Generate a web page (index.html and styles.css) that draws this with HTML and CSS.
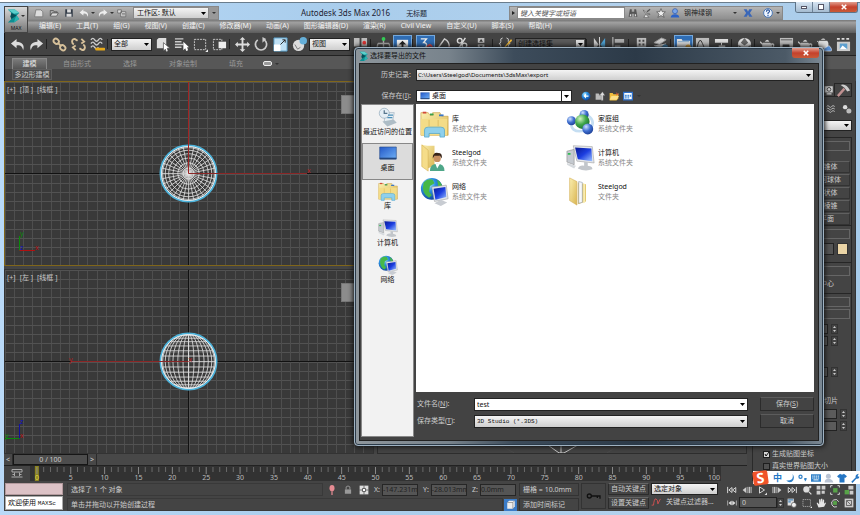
FILE: index.html
```html
<!DOCTYPE html>
<html lang="zh-CN">
<head>
  <meta charset="UTF-8">
  <meta name="viewport" content="width=device-width, initial-scale=1.0">
  <title>Autodesk 3ds Max 2016 无标题</title>
  <link rel="stylesheet" href="styles.css">
</head>
<body>
  <!-- icon sprites -->
  <svg class="sprites" aria-hidden="true">
    <defs>
      <linearGradient id="g-folder" x1="0" y1="0" x2="1" y2="1"><stop offset="0" stop-color="#fbefb0"/><stop offset="1" stop-color="#d9b552"/></linearGradient>
      <linearGradient id="g-screen" x1="0" y1="0" x2="1" y2="1"><stop offset="0" stop-color="#0a1890"/><stop offset=".5" stop-color="#1c3ee0"/><stop offset="1" stop-color="#9fc4ff"/></linearGradient>
      <linearGradient id="g-desk" x1="0" y1="0" x2="1" y2="1"><stop offset="0" stop-color="#2358c8"/><stop offset="1" stop-color="#6fb0f5"/></linearGradient>
      <radialGradient id="g-globe" cx=".35" cy=".3" r=".8"><stop offset="0" stop-color="#b4ecff"/><stop offset=".4" stop-color="#2a8fe0"/><stop offset="1" stop-color="#0c3a90"/></radialGradient>
      <radialGradient id="g-blue" cx=".35" cy=".3" r=".8"><stop offset="0" stop-color="#cfe2ff"/><stop offset=".5" stop-color="#3f6fd0"/><stop offset="1" stop-color="#18388c"/></radialGradient>
      <radialGradient id="g-green" cx=".35" cy=".3" r=".8"><stop offset="0" stop-color="#d0f5c0"/><stop offset=".5" stop-color="#3fa648"/><stop offset="1" stop-color="#17682a"/></radialGradient>
    </defs>
    <symbol id="i-max" viewBox="0 0 16 16"><path d="M1 1h8l5 4-3 3 3 4-6 4H1l4-4-1-3 1-4z" fill="#0e8f92"/><path d="M1 1h8l5 4-6 1z" fill="#5cd0cc"/><path d="M5 5l6 3-6 4-1-3z" fill="#064f58"/><path d="M11 8l3 4-6 4 1-4z" fill="#2bb3b0"/></symbol>
    <symbol id="i-new" viewBox="0 0 16 16"><path d="M3 3h8l3 3v8H1z" fill="#ddd" stroke="#666"/></symbol>
    <symbol id="i-open" viewBox="0 0 16 16"><path d="M2 12V4h5l1 2h5v2H5z" fill="#aaa" stroke="#444"/><path d="M2 13l3-5h10l-3 5z" fill="#ddd" stroke="#444"/></symbol>
    <symbol id="i-save" viewBox="0 0 16 16"><path d="M2 2h12v12H2z" fill="#333c48"/><path d="M5 2h6v5H5zM4 9h8v5H4z" fill="#ddd"/></symbol>
    <symbol id="i-undo" viewBox="0 0 16 16"><path d="M7 2L1 7l6 5V9c4-1 6 1 7 5 2-5-1-9-7-9z" fill="currentColor"/></symbol>
    <symbol id="i-redo" viewBox="0 0 16 16"><path d="M9 2l6 5-6 5V9c-4-1-6 1-7 5-2-5 1-9 7-9z" fill="currentColor"/></symbol>
    <symbol id="i-project" viewBox="0 0 16 16"><path d="M1 3h6v5H1zM6 6h8v8H6z" fill="#ddd" stroke="#555"/><path d="M8 9h5M8 11h5" stroke="#555"/></symbol>
    <symbol id="i-link" viewBox="0 0 16 16"><g fill="none" stroke="#d6c09a" stroke-width="2"><ellipse cx="4.500" cy="4.500" rx="3" ry="2.500" transform="rotate(40 4.500 4.500)"/><ellipse cx="11.500" cy="11.500" rx="3" ry="2.500" transform="rotate(40 11.500 11.500)"/><path d="M6 6l4 4"/></g></symbol>
    <symbol id="i-unlink" viewBox="0 0 16 16"><path d="M3 8c-3-2-2-6 1-6l3 2M13 8c3 2 2 6-1 6l-3-2M11 2l3 3-3 2M5 14l-3-3 3-2" fill="none" stroke="#d6c09a" stroke-width="2"/></symbol>
    <symbol id="i-bind" viewBox="0 0 16 16"><path d="M1 3q2-3 4 0t4 0 4 0M1 7q2-3 4 0t4 0 4 0M1 11q2-3 4 0t4 0" fill="none" stroke="#ccc" stroke-width="1.500"/><path d="M7 13h3m1 0h4" stroke="#e5a81a" stroke-width="3" stroke-linecap="round"/></symbol>
    <symbol id="i-select" viewBox="0 0 16 16"><path d="M2 3l2-2h8v9l-2 2H2z" fill="#ddd"/><path d="M9 6v9l2-2 1 3 2-1-1-3h3z" fill="#fff" stroke="#444" stroke-width=".7"/></symbol>
    <symbol id="i-byname" viewBox="0 0 16 16"><path d="M1 2h9M1 5h7M1 8h9M1 11h7" stroke="#ccc" stroke-width="1.500"/><path d="M10 5v9l2-2 1 3 2-1-1-3h2z" fill="#fff"/></symbol>
    <symbol id="i-region" viewBox="0 0 16 16"><path d="M1.500 2.500h12v11h-12z" fill="none" stroke="#ccc" stroke-dasharray="2 1"/><path d="M16 13v3h-3z" fill="#eee"/></symbol>
    <symbol id="i-crossing" viewBox="0 0 16 16"><path d="M1.500 2.500h9v11h-9z" fill="none" stroke="#ccc" stroke-dasharray="2 1"/><path d="M7 5h8v7H7z" fill="#eee"/></symbol>
    <symbol id="i-move" viewBox="0 0 16 16"><path d="M8 0l3 3H9v4h4V5l3 3-3 3V9H9v4h2l-3 3-3-3h2V9H3v2L0 8l3-3v2h4V3H5z" fill="#ddd"/></symbol>
    <symbol id="i-rotate" viewBox="0 0 16 16"><path d="M4 3a6 6 0 1 0 7 0" fill="none" stroke="#ccc" stroke-width="1.800"/><path d="M9 0l4 2-4 4z" fill="#ccc"/></symbol>
    <symbol id="i-scale" viewBox="0 0 16 16"><path d="M1 1h14v14H1z" fill="#bfe0f4" stroke="#559cc8"/><path d="M1 8h7v7H1z" fill="#fff"/><path d="M8 8l5-5M10 3h3v3" stroke="#222" fill="none"/></symbol>
    <symbol id="i-place" viewBox="0 0 16 16"><circle cx="7" cy="9" r="6" fill="#ddd"/><circle cx="12" cy="4" r="4" fill="#65afd8"/><path d="M3 8l3 5 3-2" fill="none" stroke="#777"/></symbol>
    <symbol id="i-pivot" viewBox="0 0 16 16"><path d="M1 1h6v9H1zM9 1h6v9H9z" fill="#bbb"/><circle cx="12" cy="6" r="2" fill="#d33"/></symbol>
    <symbol id="i-manip" viewBox="0 0 16 16"><path d="M8 1v11M2 7h12M2 7l-1 5M14 7l1 5" stroke="#aaa" fill="none" stroke-width="1.500"/><circle cx="8" cy="2" r="2" fill="#3c5"/></symbol>
    <symbol id="i-keymode" viewBox="0 0 16 16"><path d="M2 3h12v10H2z" fill="#eee"/><path d="M8 4l4 4H9v4H7V8H4z" fill="#222"/></symbol>
    <symbol id="i-snap" viewBox="0 0 16 16"><path d="M3 2h6L6 6q4 0 3 4-2 3-6 1" fill="none" stroke="#eee" stroke-width="1.500"/><path d="M11 12a2 2 0 1 1 3 0" fill="none" stroke="#e44" stroke-width="2"/></symbol>
    <symbol id="i-angle" viewBox="0 0 16 16"><path d="M1 12L8 2q6 3 5 10" fill="none" stroke="#ccc" stroke-width="1.500"/><circle cx="13" cy="12" r="2" fill="#c44"/></symbol>
    <symbol id="i-percent" viewBox="0 0 16 16"><circle cx="4" cy="4" r="2.500" fill="none" stroke="#ddd" stroke-width="1.500"/><circle cx="9" cy="9" r="2.500" fill="none" stroke="#ddd" stroke-width="1.500"/><path d="M10 1L3 12" stroke="#ddd" stroke-width="1.500"/><circle cx="14" cy="12" r="2" fill="#c44"/></symbol>
    <symbol id="i-spin" viewBox="0 0 16 16"><path d="M3 1h7v5H3zM3 8h7v5H3z" fill="#bbb"/><path d="M6.500 2l2 3h-4zM6.500 12l2-3h-4z" fill="#333"/><circle cx="13" cy="12" r="2" fill="#c44"/></symbol>
    <symbol id="i-sets" viewBox="0 0 16 16"><path d="M5 1Q2 1 3 5 3 7 1 7q2 0 2 3-1 4 2 4M9 1q3 0 2 4 0 2 2 2-2 0-2 3 1 4-2 4" fill="none" stroke="#ccc"/><path d="M7 10l7-8 1 2-7 7z" fill="#f0b93a"/></symbol>
    <symbol id="i-mirror" viewBox="0 0 16 16"><path d="M2 1l5 7-5 7z" fill="#ccc"/><path d="M14 1L9 8l5 7z" fill="#4ea2d4"/><path d="M8 0v16" stroke="#ddd"/></symbol>
    <symbol id="i-align" viewBox="0 0 16 16"><path d="M2 0v15" stroke="#ccc"/><path d="M4 2h10v4H4zM4 9h6v4H4z" fill="#aaa"/></symbol>
    <symbol id="i-layer" viewBox="0 0 16 16"><path d="M3 1h10v14H3z" fill="#bbb"/><path d="M5 4h2M9 4h2M5 8h2M9 8h2" stroke="#444" stroke-width="2"/></symbol>
    <symbol id="i-layers" viewBox="0 0 16 16"><path d="M1 6l8-5 5 2-7 5zM1 9l6 3 7-5M1 12l6 3 7-5" fill="#ccc" stroke="#999"/><circle cx="13" cy="11" r="3" fill="#3d80b0"/></symbol>
    <symbol id="i-ribbon" viewBox="0 0 16 16"><path d="M1 4V2h5l1 2h8v9H1z" fill="#ddd"/><path d="M2 5h12" stroke="#7da4c8"/><circle cx="13" cy="11" r="3" fill="#dca23a"/></symbol>
    <symbol id="i-curve" viewBox="0 0 16 16"><path d="M1 1h14v13H1z" fill="#bbb"/><path d="M2 12Q5-2 8 7t6 4" fill="none" stroke="#333"/></symbol>
    <symbol id="i-schem" viewBox="0 0 16 16"><path d="M1 2h14v4H1zM5 9h7v5H5z" fill="#ddd"/><path d="M8 6v3" stroke="#ddd"/></symbol>
    <symbol id="i-mat" viewBox="0 0 16 16"><circle cx="8" cy="8" r="7" fill="#ddd"/><path d="M8 1l4 5-4 3-4-3zM1 8l3 2v4M15 8l-3 2v4" fill="#666"/></symbol>
    <symbol id="i-teapot" viewBox="0 0 16 16"><path d="M3 6h8q4 5-1 9H5Q1 12 3 6zM5 5q3-4 5 0z" fill="#ccc"/><path d="M3 8L0 5M11 8q5-2 3 3l-3 2" fill="none" stroke="#ccc" stroke-width="1.500"/></symbol>
    <symbol id="i-frame" viewBox="0 0 16 16"><path d="M1 1h14v13H1z" fill="#bbb"/><path d="M2 3h12" stroke="#555"/><path d="M4 8h7q1 4-2 5H6Q3 12 4 8z" fill="#333"/></symbol>
    <symbol id="i-cloud" viewBox="0 0 16 16"><path d="M2 4h9q3 4-1 8H4Q0 9 2 4zM4 3q3-3 5 0z" fill="#ddd"/><path d="M2 6L0 4" stroke="#ddd"/><path d="M7 15q0-4 3-4 3-4 5 1 2 3-1 3z" fill="#5b92d8" stroke="#fff" stroke-width=".6"/></symbol>
    <symbol id="i-gallery" viewBox="0 0 16 16"><path d="M1 1h3v2H1zM6 1h3v2H6zM11 1h3v2h-3z" fill="#ddd"/><path d="M1 5h14v10H1z" fill="#ccc"/><path d="M4 7h8v6H4z" fill="#5da0d0"/><path d="M4 13l3-4 5 4z" fill="#fff"/></symbol>
    <symbol id="i-binoc" viewBox="0 0 16 16"><path d="M3 2h3v4h4V2h3l2 12h-5V9H6v5H1z" fill="#555"/><path d="M3 10h2v3H3zM11 10h2v3h-2z" fill="#ddd"/></symbol>
    <symbol id="i-sat" viewBox="0 0 16 16"><path d="M2 3q2 8 11 7L7 8zM6 10l-3 5h8z" fill="#eee" stroke="#555"/><path d="M8 6l5-4" stroke="#555" stroke-width="2"/></symbol>
    <symbol id="i-star" viewBox="0 0 16 16"><path d="M8 1l2 5h5l-4 4 2 5-5-3-5 3 2-5-4-4h5z" fill="#eee" stroke="#444"/></symbol>
    <symbol id="i-user" viewBox="0 0 16 16"><circle cx="8" cy="5" r="4" fill="#7aa5e8" stroke="#2450a8"/><path d="M1 15q1-5 7-5t7 5z" fill="#2c62c8"/></symbol>
    <symbol id="i-exch" viewBox="0 0 16 16"><path d="M1 2h5l2 4 2-4h5l-4 6 4 6h-5l-2-4-2 4H1l4-6z" fill="#3a67b8"/></symbol>
    <symbol id="i-help" viewBox="0 0 16 16"><circle cx="8" cy="8" r="7" fill="#eef5ff" stroke="#4373b5" stroke-width="1.500"/><path d="M5.500 6q0-3 2.500-3t2.500 2.500Q10 7 8 8v2M8 11v2" fill="none" stroke="#26519a" stroke-width="1.800"/></symbol>
    <symbol id="i-waves" viewBox="0 0 16 16"><path d="M1 4q2-3 4 0t4 0 5 0M1 8q2-3 4 0t4 0 5 0M1 12q2-3 4 0t4 0 5 0" fill="none" stroke="#bbb" stroke-width="1.500"/></symbol>
    <symbol id="i-gears" viewBox="0 0 16 16"><circle cx="5" cy="5" r="3.500" fill="#ddd"/><circle cx="11" cy="11" r="4" fill="#bbb"/></symbol>
    <symbol id="i-display" viewBox="0 0 16 16"><path d="M1 2h13v10H1zM4 13h8v2H4z" fill="#ccc"/><circle cx="8" cy="7" r="3" fill="none" stroke="#444" stroke-width="1.500"/></symbol>
    <symbol id="i-hammer" viewBox="0 0 16 16"><path d="M2 14L9 6" stroke="#c09090" stroke-width="2.500"/><path d="M5 2q6-2 10 6l-3 1-3-4z" fill="#ccc"/></symbol>
    <!-- file dialog -->
    <symbol id="i-recent" viewBox="0 0 32 32"><path d="M11 9h15l-3 15H10z" fill="#e8f0f4" stroke="#9ab"/><circle cx="10" cy="10" r="8" fill="#e4eef5" stroke="#8aa4b5"/><path d="M10 5v5h5" stroke="#57768c" fill="none" stroke-width="2"/><path d="M7 23l18-3 5 5-15 6z" fill="#aebdc6"/><path d="M16 13h8M15 17h8" stroke="#4c8fb8" stroke-width="2"/></symbol>
    <symbol id="i-desktop" viewBox="0 0 32 32"><path d="M2 5h28v20H2z" fill="url(#g-desk)" stroke="#264b86"/><path d="M2 23h28v3H2z" fill="#24467c"/></symbol>
    <symbol id="i-library" viewBox="0 0 32 32"><path d="M1 4h8l2 3h3V4h8l2 4h7v21H1z" fill="url(#g-folder)" stroke="#c79f42" stroke-width=".7"/><path d="M3 4h4" stroke="#d34a3a" stroke-width="2"/><path d="M11 6h4" stroke="#3a9f4a" stroke-width="2"/><path d="M21 7h5" stroke="#3a77c8" stroke-width="2"/><path d="M1 11h29v18H1z" fill="#f4dc88"/><path d="M10 12v7M20 12v7" stroke="#dcbc62"/><path d="M5 31v-8q0-3 4-3h14q4 0 4 3v8h-5v-4H10v4z" fill="#8fd0ec" stroke="#4fa4cc" stroke-width=".8"/></symbol>
    <symbol id="i-userdir" viewBox="0 0 32 32"><path d="M2 2l6 1h8v22l-8 3-6-2z" fill="url(#g-folder)"/><path d="M2 2l7 6v23l-7-5z" fill="#f5dd8a" stroke="#d2ad50" stroke-width=".6"/><circle cx="19" cy="17" r="4" fill="#c68e60"/><path d="M14 17q0-7 6-6 5 0 4 6l-2-3h-6z" fill="#382418"/><path d="M11 31q0-8 8-8t8 8z" fill="#4fa789"/><path d="M17 23l2 5 3-5z" fill="#fff"/></symbol>
    <symbol id="i-globe" viewBox="0 0 32 32"><circle cx="13" cy="13" r="12" fill="url(#g-globe)"/><path d="M4 6q5-5 10-3l2 4-5 3-1 6 3 4-3 3Q1 18 4 6zM19 3q5 3 6 9l-5-2z" fill="#46b848"/><path d="M13 11l16-2 2 15-15 3z" fill="#dfe4ea" stroke="#999" stroke-width=".6"/><path d="M15 13l13-2 1 11-12 3z" fill="url(#g-screen)"/><path d="M16 29l7-4 7 3-7 4z" fill="#c8ccd2"/></symbol>
    <symbol id="i-computer" viewBox="0 0 32 32"><path d="M1 9l8-2v17l-8-3z" fill="#c5cad0" stroke="#888" stroke-width=".6"/><path d="M2 12h3" stroke="#3b5" stroke-width="2"/><path d="M8 3l21 1 2 18-19-2z" fill="#e4e7eb" stroke="#999" stroke-width=".6"/><path d="M10 5l18 1 1 14-16-2z" fill="url(#g-screen)"/><path d="M13 28q2-4 7-3v-4h4v4q6 1 5 4-8 3-16-1z" fill="#c2c6cb"/><path d="M1 22l10 3-2 3-8-4z" fill="#d6dade"/></symbol>
    <symbol id="i-homegroup" viewBox="0 0 32 32"><path d="M6 13q-2 14 14 11" stroke="#c5def2" fill="none" stroke-width="3"/><path d="M24 7q9 6 3 15" stroke="#c5def2" fill="none" stroke-width="3"/><circle cx="20" cy="6" r="5" fill="url(#g-blue)"/><circle cx="6" cy="13" r="5" fill="url(#g-blue)"/><circle cx="18" cy="14" r="8" fill="url(#g-green)"/><circle cx="24" cy="22" r="6" fill="url(#g-blue)"/></symbol>
    <symbol id="i-folder" viewBox="0 0 32 32"><path d="M13 6l9 2v19l-9 3z" fill="#e2c566"/><path d="M14 5l4 1v22l-4 1z" fill="#f6f7fa" stroke="#8794a8" stroke-width=".6"/><path d="M4 1l8 4v26l-8-5z" fill="url(#g-folder)" stroke="#cfa94b" stroke-width=".6"/><path d="M19 7l2 1v20l-2 1z" fill="#f9ecb0"/></symbol>
    <symbol id="i-back" viewBox="0 0 16 16"><circle cx="8" cy="8" r="7" fill="url(#g-globe)"/><path d="M8 4L4 8l4 4V9h4V7H8z" fill="#fff"/></symbol>
    <symbol id="i-up" viewBox="0 0 16 16"><path d="M1 4h5l1 2h5v8H1z" fill="#bbb"/><path d="M10 15V7H7l5-6 4 6h-3v8z" fill="#ddd" stroke="#555" stroke-width=".6"/></symbol>
    <symbol id="i-newdir" viewBox="0 0 16 16"><path d="M1 3h5l1 2h6l2-2v9l-3 3H1z" fill="#f0bd3c"/><path d="M4 8h12l-4 6H1z" fill="#fbe08a"/><path d="M12 1l1 3 3 1-3 1-1 2z" fill="#e5533a"/></symbol>
    <symbol id="i-view" viewBox="0 0 16 16"><path d="M1 2h14v12H1z" fill="#fff" stroke="#2e6fc8" stroke-width="2"/><path d="M3 6h3v3H3zM7 6h3v3H7zM11 6h2v3h-2zM3 10h3v2H3zM7 10h3v2H7z" fill="#4a8fd8"/></symbol>
    <!-- status bar -->
    <symbol id="i-pin" viewBox="0 0 16 16"><ellipse cx="8" cy="5" rx="4" ry="5" fill="#e58b92"/><path d="M8 10v6" stroke="#e58b92" stroke-width="2"/></symbol>
    <symbol id="i-lock" viewBox="0 0 16 16"><path d="M3 7h10v7H3z" fill="#999"/><path d="M5 7V3q3-3 6 0v4" fill="none" stroke="#999" stroke-width="1.500"/></symbol>
    <symbol id="i-abs" viewBox="0 0 16 16"><path d="M1 1h14v14H1z" fill="#ddd"/><circle cx="8" cy="8" r="3" fill="#fff" stroke="#333" stroke-width="1.500"/><path d="M8 1v3M8 12v3M1 8h3M12 8h3" stroke="#333"/></symbol>
    <symbol id="i-key" viewBox="0 0 24 12"><circle cx="5" cy="6" r="3" fill="none" stroke="#111" stroke-width="2"/><path d="M8 6h13v4M17 6v3" stroke="#111" stroke-width="2" fill="none"/></symbol>
    <symbol id="i-cube" viewBox="0 0 16 16"><path d="M2 4l3-3h9v9l-3 4H2z" fill="#eee"/><path d="M2 4h9v10M11 4l3-3" fill="none" stroke="#777"/></symbol>
    <symbol id="i-wave" viewBox="0 0 16 16"><path d="M1 13h3Q5 2 8 3t3 8l4-8" fill="none" stroke="#d05050" stroke-width="1.500"/></symbol>
    <symbol id="i-first" viewBox="0 0 16 16"><path d="M1 3v10M8 4L3 8l5 4zM14 4L9 8l5 4z" fill="none" stroke="#ddd" stroke-width="1.500"/></symbol>
    <symbol id="i-prev" viewBox="0 0 16 16"><path d="M7 3v10L1 8z" fill="#ccc"/><path d="M9.500 3v10M12 3v10M14.500 3v10" stroke="#ccc" stroke-width="1.500"/></symbol>
    <symbol id="i-play" viewBox="0 0 16 16"><path d="M4 3l8 5-8 5z" fill="none" stroke="#ddd" stroke-width="1.500"/><path d="M16 12v4h-4z" fill="#ddd"/></symbol>
    <symbol id="i-next" viewBox="0 0 16 16"><path d="M9 3v10l6-5z" fill="#ccc"/><path d="M1.500 3v10M4 3v10M6.500 3v10" stroke="#ccc" stroke-width="1.500"/></symbol>
    <symbol id="i-last" viewBox="0 0 16 16"><path d="M15 3v10M2 4l5 4-5 4zM8 4l5 4-5 4z" fill="none" stroke="#ddd" stroke-width="1.500"/></symbol>
    <symbol id="i-keystep" viewBox="0 0 16 16"><path d="M1 4v8M15 4v8M7 5L3 8l4 3zM9 5l4 3-4 3z" fill="#ddd" stroke="#ddd"/></symbol>
    <symbol id="i-timecfg" viewBox="0 0 16 16"><path d="M1 1h10v11H1z" fill="#ddd"/><path d="M2 3h8M2 6h4" stroke="#4a86b8" stroke-width="2"/><circle cx="11" cy="11" r="4" fill="#eee" stroke="#444"/></symbol>
    <symbol id="i-zoom" viewBox="0 0 16 16"><circle cx="7" cy="7" r="5" fill="#ddd"/><path d="M11 11l4 4M11 3h4M13 1v4" stroke="#ddd" stroke-width="2"/></symbol>
    <symbol id="i-zoomall" viewBox="0 0 16 16"><path d="M1 1h6v6H1zM9 1h6v6H9zM1 9h6v6H1zM9 9h5v5H9z" fill="#ccc"/></symbol>
    <symbol id="i-extent" viewBox="0 0 16 16"><path d="M5 5h7v7H5z" fill="#57a348"/><path d="M1 4V1h3M12 1h3v3M15 12v3h-3M4 15H1v-3" fill="none" stroke="#ddd" stroke-width="1.500"/></symbol>
    <symbol id="i-extall" viewBox="0 0 16 16"><path d="M7 1h8v6H7zM9 9h6v6H9z" fill="#ccc"/><path d="M1 8h7v7H1z" fill="#57a348"/></symbol>
    <symbol id="i-hand" viewBox="0 0 16 16"><path d="M4 15L1 8l1-1 3 3V2h2v5l1-6h2v6l1-5 2 1v6l2-2 1 1-3 6z" fill="#e5e5e5"/></symbol>
    <symbol id="i-orbit" viewBox="0 0 16 16"><path d="M5 5h6v6H5z" fill="#57a348"/><path d="M14 6a6 6 0 1 0-3 8" fill="none" stroke="#ddd" stroke-width="1.500"/></symbol>
    <symbol id="i-maxvp" viewBox="0 0 16 16"><path d="M1 1h14v14H1z" fill="#ccc"/><path d="M4 4h8v8H4zM5 5l6 6" stroke="#333" fill="none"/></symbol>
    <symbol id="i-trackview" viewBox="0 0 24 20"><path d="M2 2h20v5H2zM1 17h22M7 8v7M17 8v7M3 12h5M16 12h5" fill="none" stroke="#aaa" stroke-width="2"/></symbol>
    <!-- input method bar -->
    <symbol id="i-moon" viewBox="0 0 16 16"><path d="M12 1q3 12-10 11 4 4 9 2 6-5 1-13z" fill="#2f80c8"/></symbol>
    <symbol id="i-punct" viewBox="0 0 16 16"><circle cx="4" cy="6" r="2.500" fill="none" stroke="#2f80c8" stroke-width="2"/><path d="M10 8h4q0 4-3 6 1-3-1-3z" fill="#2f80c8"/></symbol>
    <symbol id="i-kbd" viewBox="0 0 16 16"><path d="M0 2h16v12H0z" fill="#2f80c8"/><path d="M2 5h12M2 8h12" stroke="#fff" stroke-width="1.500" stroke-dasharray="2 1"/><path d="M4 11h8" stroke="#fff" stroke-width="1.500"/></symbol>
    <symbol id="i-person" viewBox="0 0 16 16"><circle cx="7" cy="5" r="4" fill="#b9c3d3"/><path d="M1 15q0-6 6-6t8 6z" fill="#b9c3d3"/></symbol>
    <symbol id="i-shirt" viewBox="0 0 16 16"><path d="M5 1q3 3 6 0l5 4-3 3-1-1v8H4V7L3 8 0 5z" fill="#2576c4"/></symbol>
    <symbol id="i-wrench" viewBox="0 0 16 16"><path d="M2 14l7-7q-1-5 5-6l-2 4 3 1q0 4-5 3l-6 7z" fill="#2576c4"/></symbol>
  </svg>

  <div class="app">
    <header class="top">
      <button class="app-menu" aria-label="MAX"><svg class="app-logo"><use href="#i-max"/></svg><i class="caret"></i><span>MAX</span></button>
      <div class="titlebar">
        <div class="quick">
          <button><svg class="icon-s"><use href="#i-new"/></svg></button>
          <button><svg class="icon-s"><use href="#i-open"/></svg></button>
          <button><svg class="icon-s"><use href="#i-save"/></svg></button>
          <button><svg class="icon-s"><use href="#i-undo"/></svg></button>
          <i class="caret"></i>
          <button><svg class="icon-s"><use href="#i-redo"/></svg></button>
          <i class="caret"></i>
          <button><svg class="icon-s"><use href="#i-project"/></svg></button>
          <select class="workspace" aria-label="工作区"><option>工作区: 默认</option></select>
          <button class="more"><i class="caret"></i></button>
        </div>
        <h1>Autodesk 3ds Max 2016 <span>无标题</span></h1>
        <div class="infocenter">
          <button class="expand"><i class="caret-right"></i></button>
          <input type="text" placeholder="键入关键字或短语" aria-label="搜索">
          <button><svg class="icon-s"><use href="#i-binoc"/></svg></button>
          <button><svg class="icon-s"><use href="#i-sat"/></svg></button>
          <button><svg class="icon-s"><use href="#i-star"/></svg></button>
          <button><svg class="icon-s"><use href="#i-user"/></svg></button>
          <span class="user">钢神绿钢</span>
          <i class="caret"></i>
          <button class="exchange"><svg class="icon-s"><use href="#i-exch"/></svg></button>
          <button class="help"><svg class="icon-s"><use href="#i-help"/></svg></button>
          <i class="caret"></i>
        </div>
        <div class="winbtns">
          <button aria-label="最小化"><i class="min"></i></button>
          <button aria-label="还原"><i class="max"></i></button>
          <button class="close" aria-label="关闭"><svg viewBox="0 0 8 8"><path d="M1 1l6 6M7 1L1 7" stroke="#fff" stroke-width="2"/></svg></button>
        </div>
      </div>
      <nav class="menubar">
        <a href="#">编辑(E)</a><a href="#">工具(T)</a><a href="#">组(G)</a><a href="#">视图(V)</a><a href="#">创建(C)</a><a href="#">修改器(M)</a><a href="#">动画(A)</a><a href="#">图形编辑器(D)</a><a href="#">渲染(R)</a><a href="#">Civil View</a><a href="#">自定义(U)</a><a href="#">脚本(S)</a><a href="#">帮助(H)</a>
      </nav>
    </header>

    <div class="toolbar">
      <button><svg class="icon"><use href="#i-undo"/></svg></button>
      <button><svg class="icon"><use href="#i-redo"/></svg></button>
      <i class="sep"></i>
      <button><svg class="icon"><use href="#i-link"/></svg></button>
      <button><svg class="icon"><use href="#i-unlink"/></svg></button>
      <button><svg class="icon"><use href="#i-bind"/></svg></button>
      <i class="sep"></i>
      <select class="filter" aria-label="选择过滤器"><option>全部</option></select>
      <button><svg class="icon"><use href="#i-select"/></svg></button>
      <button><svg class="icon"><use href="#i-byname"/></svg></button>
      <button><svg class="icon"><use href="#i-region"/></svg></button>
      <button><svg class="icon"><use href="#i-crossing"/></svg></button>
      <i class="sep"></i>
      <button><svg class="icon"><use href="#i-move"/></svg></button>
      <button><svg class="icon"><use href="#i-rotate"/></svg></button>
      <button><svg class="icon"><use href="#i-scale"/></svg></button>
      <button><svg class="icon"><use href="#i-place"/></svg></button>
      <select class="filter" aria-label="参考坐标系"><option>视图</option></select>
      <button><svg class="icon"><use href="#i-pivot"/></svg></button>
      <i class="sep"></i>
      <button><svg class="icon"><use href="#i-manip"/></svg></button>
      <button class="on"><svg class="icon"><use href="#i-keymode"/></svg></button>
      <i class="sep"></i>
      <button class="on"><svg class="icon"><use href="#i-snap"/></svg></button>
      <button><svg class="icon"><use href="#i-angle"/></svg></button>
      <button><svg class="icon"><use href="#i-percent"/></svg></button>
      <button><svg class="icon"><use href="#i-spin"/></svg></button>
      <i class="sep"></i>
      <button><svg class="icon"><use href="#i-sets"/></svg></button>
      <select class="sets" aria-label="选择集"><option>创建选择集</option></select>
      <i class="sep"></i>
      <button><svg class="icon"><use href="#i-mirror"/></svg></button>
      <button><svg class="icon"><use href="#i-align"/></svg></button>
      <i class="sep"></i>
      <button><svg class="icon"><use href="#i-layer"/></svg></button>
      <button><svg class="icon"><use href="#i-layers"/></svg></button>
      <i class="sep"></i>
      <button class="on"><svg class="icon"><use href="#i-ribbon"/></svg></button>
      <button><svg class="icon"><use href="#i-curve"/></svg></button>
      <button><svg class="icon"><use href="#i-schem"/></svg></button>
      <i class="sep"></i>
      <button><svg class="icon"><use href="#i-mat"/></svg></button>
      <i class="sep"></i>
      <button><svg class="icon"><use href="#i-teapot"/></svg></button>
      <button><svg class="icon"><use href="#i-frame"/></svg></button>
      <button><svg class="icon"><use href="#i-teapot"/></svg></button>
      <button><svg class="icon"><use href="#i-cloud"/></svg></button>
      <button><svg class="icon"><use href="#i-gallery"/></svg></button>
    </div>

    <div class="ribbon">
      <div class="ribbon-tabs">
        <button class="active">建模</button>
        <button>自由形式</button>
        <button>选择</button>
        <button>对象绘制</button>
        <button>填充</button>
        <button class="ribbon-min"><i class="pill"></i><i class="caret"></i></button>
      </div>
      <div class="ribbon-panel"><button>多边形建模</button></div>
    </div>

    <main class="work">
      <div class="stage">
        <div class="viewports">
          <div class="viewport active">
            <svg class="scene" data-view="top"></svg>
            <div class="vp-label"><span>[+]</span><span>[顶 ]</span><span>[线框 ]</span></div>
            <div class="viewcube"></div>
          </div>
          <div class="viewport"></div>
          <div class="viewport">
            <svg class="scene" data-view="left"></svg>
            <div class="vp-label"><span>[+]</span><span>[左 ]</span><span>[线框 ]</span></div>
            <div class="viewcube"></div>
          </div>
          <div class="viewport persp">
            <svg class="persp-grid" viewBox="0 0 370 12"><path d="M165 0l17 12h5l21-12M184 0v12" fill="none" stroke="#c8c8c8"/><path d="M115 0l22 12M250 0l-20 12" fill="none" stroke="#4b4b4b"/></svg>
          </div>
        </div>
        <div class="timeslider">
          <button>&lt;</button>
          <button class="thumb">0 / 100</button>
          <button>&gt;</button>
        </div>
        <div class="trackbar">
          <button class="track-open"><svg><use href="#i-trackview"/></svg></button>
          <svg class="ruler" id="ruler"></svg>
        </div>
      </div>

      <aside class="panel">
        <div class="panel-tabs">
          <button><svg class="icon-s"><use href="#i-display"/></svg></button>
          <button class="tab-on"><svg class="icon"><use href="#i-hammer"/></svg></button>
        </div>
        <div class="panel-cats">
          <button><svg class="icon-s"><use href="#i-waves"/></svg></button>
          <button><svg class="icon-s"><use href="#i-gears"/></svg></button>
        </div>
        <select class="panel-select" aria-label="类型"><option></option></select>
        <section class="rollout types">
          <div class="roll-head"></div>
          <button>圆锥体</button>
          <button>几何球体</button>
          <button>管状体</button>
          <button>四棱锥</button>
          <button>平面</button>
        </section>
        <section class="rollout name">
          <div class="roll-head"></div>
          <div class="name-row"><input type="text" aria-label="名称"><button class="swatch" aria-label="颜色"></button></div>
        </section>
        <section class="rollout method">
          <div class="roll-head"></div>
          <div class="center-row">中心</div>
        </section>
        <section class="rollout params">
          <div class="roll-head"></div>
          <div class="roll-head"></div>
          <div class="spin-row"><input type="text" aria-label="半径"><button class="spin" aria-label="调整半径"></button></div>
          <div class="spin-row"><input type="text" aria-label="分段"><button class="spin" aria-label="调整分段"></button></div>
          <div class="spin-row hemi"><input type="text" aria-label="半球"><button class="spin" aria-label="调整半球"></button></div>
          <div class="slice-row">切片</div>
          <div class="spin-row wide"><input type="text" aria-label="切片起始"><button class="spin" aria-label="调整切片起始"></button></div>
          <div class="spin-row wide"><input type="text" aria-label="切片结束"><button class="spin" aria-label="调整切片结束"></button></div>
          <label><input type="checkbox">轴心在底部</label>
          <label><input type="checkbox" checked>生成贴图坐标</label>
          <label><input type="checkbox">真实世界贴图大小</label>
        </section>
      </aside>
    </main>

    <footer class="status">
      <div class="listener">
        <div class="macro"></div>
        <div class="script">欢迎使用 <span>MAXSc</span></div>
      </div>
      <div class="info">
        <div class="row">
          <p class="prompt">选择了 1 个 对象</p>
          <button><svg class="icon-s"><use href="#i-pin"/></svg></button>
          <button><svg class="icon-s"><use href="#i-lock"/></svg></button>
          <button><svg class="icon-s"><use href="#i-abs"/></svg></button>
          <label>X:<input type="text" value="-147.231m"></label>
          <label>Y:<input type="text" value="-28.013mm"></label>
          <label>Z:<input type="text" value="0.0mm"></label>
          <p class="box">栅格 = 10.0mm</p>
        </div>
        <div class="row">
          <p class="prompt">单击并拖动以开始创建过程</p>
          <button class="tagbtn"><svg class="icon-s"><use href="#i-cube"/></svg></button>
          <p class="box">添加时间标记</p>
        </div>
      </div>
      <button class="bigkey" aria-label="设置关键点"><svg><use href="#i-key"/></svg></button>
      <div class="keys">
        <button>自动关键点</button>
        <button>设置关键点</button>
      </div>
      <div class="keyfilter">
        <select aria-label="关键点对象"><option>选定对象</option></select>
        <div class="filter-row"><svg class="icon-s"><use href="#i-wave"/></svg><button>关键点过滤器...</button></div>
      </div>
      <div class="play">
        <div>
          <button><svg class="icon-s"><use href="#i-first"/></svg></button>
          <button><svg class="icon-s"><use href="#i-prev"/></svg></button>
          <button><svg class="icon-s"><use href="#i-play"/></svg></button>
          <button><svg class="icon-s"><use href="#i-next"/></svg></button>
          <button><svg class="icon-s"><use href="#i-last"/></svg></button>
        </div>
        <div>
          <button><svg class="icon-s"><use href="#i-keystep"/></svg></button>
          <input type="text" value="0" aria-label="当前帧"><button class="spin" aria-label="调整帧"></button>
          <button><svg class="icon-s"><use href="#i-timecfg"/></svg></button>
        </div>
      </div>
      <div class="nav">
        <button><svg class="icon-s"><use href="#i-zoom"/></svg></button>
        <button><svg class="icon-s"><use href="#i-zoomall"/></svg></button>
        <button><svg class="icon-s"><use href="#i-extent"/></svg></button>
        <button><svg class="icon-s"><use href="#i-extall"/></svg></button>
        <button><svg class="icon-s"><use href="#i-region"/></svg></button>
        <button><svg class="icon-s"><use href="#i-hand"/></svg></button>
        <button><svg class="icon-s"><use href="#i-orbit"/></svg></button>
        <button><svg class="icon-s"><use href="#i-maxvp"/></svg></button>
      </div>
    </footer>
  </div>

  <!-- export dialog -->
  <form class="dialog" role="dialog" aria-label="选择要导出的文件">
    <div class="dlg-title">
      <svg class="icon-s"><use href="#i-max"/></svg>
      <h2>选择要导出的文件</h2>
      <button type="button" class="close" aria-label="关闭"><svg viewBox="0 0 8 8"><path d="M1 1l6 6M7 1L1 7" stroke="#fff" stroke-width="2"/></svg></button>
    </div>
    <div class="dlg-body">
      <div class="dlg-row">
        <label for="history">历史记录:</label>
        <select id="history" class="grey path"><option>C:\Users\Steelgod\Documents\3dsMax\export</option></select>
      </div>
      <div class="dlg-row lookin">
        <label for="lookin">保存在(<u>I</u>):</label>
        <div class="drive"><svg class="icon-s"><use href="#i-desktop"/></svg><select id="lookin"><option>桌面</option></select></div>
        <div class="dlg-tools">
          <button type="button"><svg class="icon-s"><use href="#i-back"/></svg></button>
          <button type="button"><svg class="icon-s"><use href="#i-up"/></svg></button>
          <button type="button"><svg class="icon-s"><use href="#i-newdir"/></svg></button>
          <button type="button"><svg class="icon-s"><use href="#i-view"/></svg></button>
          <i class="caret"></i>
        </div>
      </div>
      <div class="dlg-main">
        <div class="places">
          <button type="button"><svg><use href="#i-recent"/></svg>最近访问的位置</button>
          <button type="button" class="selected"><svg><use href="#i-desktop"/></svg>桌面</button>
          <button type="button"><svg><use href="#i-library"/></svg>库</button>
          <button type="button"><svg><use href="#i-computer"/></svg>计算机</button>
          <button type="button"><svg><use href="#i-globe"/></svg>网络</button>
        </div>
        <div class="dlg-right">
          <ul class="files">
            <li><svg><use href="#i-library"/></svg><div><b>库</b><span>系统文件夹</span></div></li>
            <li><svg><use href="#i-homegroup"/></svg><div><b>家庭组</b><span>系统文件夹</span></div></li>
            <li><svg><use href="#i-userdir"/></svg><div><b>Steelgod</b><span>系统文件夹</span></div></li>
            <li><svg><use href="#i-computer"/></svg><div><b>计算机</b><span>系统文件夹</span></div></li>
            <li><svg><use href="#i-globe"/></svg><div><b>网络</b><span>系统文件夹</span></div></li>
            <li><svg><use href="#i-folder"/></svg><div><b>Steelgod</b><span>文件夹</span></div></li>
          </ul>
          <div class="fields">
            <label for="fname">文件名(<u>N</u>):</label>
            <input id="fname" class="combo" type="text" value="test">
            <button type="submit">保存(<u>S</u>)</button>
            <label for="ftype">保存类型(<u>T</u>):</label>
            <select id="ftype" class="grey mono"><option>3D Studio (*.3DS)</option></select>
            <button type="button">取消</button>
          </div>
        </div>
      </div>
    </div>
  </form>

  <!-- input method bar -->
  <div class="ime">
    <span class="sogou">S</span>
    <span class="zh">中</span>
    <svg class="icon-s"><use href="#i-moon"/></svg>
    <svg class="icon-s"><use href="#i-punct"/></svg>
    <svg class="icon-s"><use href="#i-kbd"/></svg>
    <svg class="icon-s"><use href="#i-person"/></svg>
    <svg class="icon-s"><use href="#i-shirt"/></svg>
    <svg class="icon-s"><use href="#i-wrench"/></svg>
  </div>

  <script src="script.js"></script>
</body>
</html>
```
FILE: styles.css
```css
* {
  box-sizing: border-box;
}

html, body {
  margin: 0;
  height: 100%;
  overflow: hidden;
}

body {
  position: relative;
  background: #fff;
  color: #ccc;
  font: 7px/10px "Noto Sans", "Noto Sans CJK SC", sans-serif;
}

button, input, select {
  margin: 0;
  padding: 0;
  border: 0;
  border-radius: 0;
  background: none;
  color: inherit;
  font: inherit;
  outline: 0;
}

button {
  display: flex;
  align-items: center;
  justify-content: center;
}

select, input[type="checkbox"] {
  appearance: none;
}

select {
  padding: 0 9px 0 2px;
  border: 1px solid #222;
  color: #111;
  background: url("data:image/svg+xml,%3Csvg xmlns='http://www.w3.org/2000/svg' width='5' height='3'%3E%3Cpath d='M0 0h5L2.5 3z'/%3E%3C/svg%3E") no-repeat right 2px center, linear-gradient(#f4f4f4, #cfcfcf);
}

h1, h2, p, ul {
  margin: 0;
  padding: 0;
  font-size: inherit;
  font-weight: normal;
  list-style: none;
}

a {
  color: inherit;
  text-decoration: none;
}

.sprites {
  position: absolute;
  width: 0;
  height: 0;
}

.icon {
  width: 15px;
  height: 15px;
}

.icon-s {
  width: 10px;
  height: 10px;
  flex: none;
}

.caret {
  border: 2px solid transparent;
  border-top-color: #333;
  border-bottom: 0;
}

.caret-right {
  border: 2px solid transparent;
  border-left: 3px solid #222;
  border-right: 0;
}

/* main window */
.app {
  display: flex;
  flex-direction: column;
  height: 100%;
  padding: 0 4px 4px;
  border-top: 2px solid #fff;
  background: linear-gradient(90deg, #b9d9f7, #a9cdec 40%, #b4d2ed 80%, #a7cbea);
  box-shadow: inset 0 1px #6a7d8c;
}

.top {
  display: grid;
  grid-template-columns: 24px 1fr;
  grid-template-rows: 18px 13px;
}

.app-menu {
  grid-row: 1 / 3;
  flex-wrap: wrap;
  margin-top: 4px;
  border: 1px solid #444;
  background: linear-gradient(#d9d9d9, #777);
  color: #111;
  font-size: 5px;
  line-height: 6px;
}

.app-logo {
  width: 14px;
  height: 15px;
}

.titlebar {
  display: flex;
  align-items: flex-start;
  padding-top: 4px;
}

.quick, .infocenter {
  display: flex;
  align-items: center;
  height: 14px;
  border: 1px solid #888;
  background: linear-gradient(#b5b5b5, #8f8f8f);
  color: #eee;
}

.quick {
  width: 191px;
  padding-left: 2px;
}

.quick button {
  width: 15px;
}

.workspace {
  width: 76px;
  height: 12px;
  margin-left: auto;
  padding-left: 3px;
  border-color: #888;
}

.quick .more {
  width: 9px;
  height: 12px;
  background: #999;
}

.titlebar h1 {
  flex: 1;
  text-align: center;
  color: #223;
  font-size: 8px;
  line-height: 14px;
}

.titlebar h1 span {
  margin-left: 14px;
  font-size: 7px;
}

.infocenter {
  width: 274px;
  color: #222;
}

.infocenter .expand {
  width: 7px;
}

.infocenter input {
  width: 108px;
  height: 12px;
  margin-right: 1px;
  padding-left: 2px;
  background: #fff;
  border: 1px solid #888;
  font-style: italic;
}

.infocenter input::placeholder {
  color: #555;
  opacity: 1;
}

.infocenter button:not(.expand) {
  width: 14px;
}

.infocenter .user {
  width: 49px;
  margin-left: 2px;
}

.infocenter .exchange {
  margin-left: 4px;
}

.infocenter .help {
  margin-left: 6px;
}

.infocenter .help + .caret {
  margin-left: 1px;
}

.winbtns {
  display: flex;
  height: 11px;
  margin: -4px -2px 0 12px;
  border: 1px solid #5e7387;
  border-top: 0;
  border-radius: 0 0 3px 3px;
  overflow: hidden;
}

.winbtns button {
  width: 17px;
  border-right: 1px solid #6c8297;
  background: linear-gradient(#d6e4f2, #a4bbd0);
}

.min {
  width: 6px;
  height: 3px;
  border: 1px solid #556;
  background: #fff;
}

.max {
  width: 6px;
  height: 6px;
  border: 1px solid #556;
  background: #fff;
}

.winbtns .close, .dlg-title .close {
  width: 27px;
  border: 0;
  background: linear-gradient(#e2a090, #c5412c 50%, #c85a38);
}

.close svg {
  width: 6px;
  height: 6px;
}

.menubar {
  display: flex;
  gap: 15px;
  padding-left: 11px;
  background: linear-gradient(#777, #a0a0a0 20%, #5c5c5c);
  color: #f2f2f2;
  line-height: 12px;
  white-space: nowrap;
}

.toolbar {
  display: flex;
  align-items: center;
  height: 23px;
  padding-left: 3px;
  border-left: 1px solid #111;
  border-bottom: 1px solid #222;
  background: #434343;
  color: #ddd;
}

.toolbar button {
  width: 19px;
  height: 18px;
}

.toolbar .on {
  background: #2f6db4;
  border: 1px solid #74a8dc;
}

.sep {
  width: 4px;
  height: 10px;
  border-left: 1px solid #222;
}

.toolbar select {
  height: 13px;
  width: 41px;
  margin-right: 1px;
}

.toolbar .sets {
  width: 71px;
  margin: 0;
  background-color: #5a5a5a;
  background-image: url("data:image/svg+xml,%3Csvg xmlns='http://www.w3.org/2000/svg' width='8' height='9'%3E%3Cpath fill='%23ddd' d='M0 0h8v9H0z'/%3E%3Cpath d='M2 3h5L4.500 6z'/%3E%3C/svg%3E");
  background-position: right 1px center;
}

.ribbon {
  padding-left: 8px;
  background: #444;
  border-left: 1px solid #111;
}

.ribbon-tabs {
  display: flex;
  height: 13px;
  align-items: stretch;
  margin-left: -8px;
  padding: 2px 0 0 7px;
  background: #575757;
  color: #999;
}

.ribbon-tabs button {
  margin-right: 32px;
}

.ribbon-tabs .active {
  width: 35px;
  margin-right: 16px;
  border: 1px solid #888;
  border-bottom: 0;
  background: linear-gradient(#7b7b7b, #555);
  color: #e5e5e5;
}

.ribbon-tabs .ribbon-min {
  margin-left: -12px;
  gap: 3px;
}

.pill {
  width: 9px;
  height: 5px;
  border: 1px solid #eee;
  border-radius: 2px;
  background: #999;
}

.ribbon-panel {
  height: 12px;
  background: #444;
}

.ribbon-panel button {
  width: 40px;
  height: 11px;
  border: 1px solid #5e5e5e;
  background: #4a4a4a;
  margin-left: -1px;
}

/* work area */
.work {
  flex: 1;
  display: grid;
  grid-template-columns: minmax(0, 1fr) 104px;
  gap: 5px;
  min-height: 0;
  background: #444;
}

.stage {
  display: flex;
  flex-direction: column;
  min-height: 0;
}

.viewports {
  flex: 1;
  display: grid;
  grid-template: 1fr 1fr / 1fr 1fr;
  gap: 3px;
  min-height: 0;
}

.viewport {
  position: relative;
  overflow: hidden;
  min-height: 0;
  background: #393939;
  border: 1px solid #333;
}

.viewport.active {
  border-color: #80661a;
}

.persp {
  display: flex;
  align-items: flex-end;
  background: #444;
  border-color: #2d2d2d;
}

.persp-grid {
  width: 100%;
}

.scene {
  display: block;
  width: 100%;
  height: 100%;
}

.scene text {
  font-size: 7px;
}

.vp-label {
  position: absolute;
  top: 3px;
  left: 2px;
  display: flex;
  gap: 4px;
  color: #c8c8c8;
}

.viewcube {
  position: absolute;
  top: 13px;
  right: 12px;
  width: 20px;
  height: 19px;
  background: #8c8c8c;
  border: 1px solid #777;
}

.timeslider {
  display: flex;
  height: 12px;
  background: #484848;
  border-bottom: 1px solid #222;
}

.timeslider button {
  width: 9px;
  border-right: 1px solid #2b2b2b;
}

.timeslider .thumb {
  width: 75px;
  border: 1px solid #161616;
  background: #4d4d4d;
}

.trackbar {
  display: flex;
  height: 15px;
  background: #444;
}

.track-open {
  width: 26px;
}

.track-open svg {
  width: 12px;
  height: 11px;
}

.ruler {
  flex: 1;
  min-width: 0;
  height: 15px;
  margin-right: 26px;
  background: #323232;
  font-size: 7px;
  overflow: visible;
}

/* command panel */
.panel {
  display: flex;
  flex-direction: column;
  min-height: 0;
  overflow: hidden;
  padding: 2px 3px 0 0;
  border-left: 1px solid #2a2a2a;
  border-right: 1px solid #333;
}

.panel-tabs, .panel-cats {
  display: flex;
  justify-content: flex-end;
  align-items: center;
}

.panel-tabs {
  height: 14px;
  border-bottom: 1px solid #262626;
}

.panel-tabs .tab-on {
  width: 18px;
  height: 14px;
  border: 1px solid #262626;
  border-bottom: 0;
}

.panel-cats {
  height: 23px;
  gap: 6px;
}

.panel-select {
  height: 11px;
  flex: none;
  margin-bottom: 6px;
}

.rollout {
  flex: none;
  display: flex;
  flex-direction: column;
  border-right: 1px solid #262626;
  border-top: 1px solid #262626;
  padding: 3px 1px 0 2px;
}

.roll-head {
  height: 10px;
  flex: none;
  border: 1px solid #666;
}

.types {
  height: 88px;
}

.types .roll-head {
  margin-bottom: 10px;
}

.types button {
  align-self: flex-end;
  width: 46px;
  height: 12px;
  border: 1px solid #333;
  border-top-color: #606060;
}

.types button + button {
  margin-top: 1px;
}

.name {
  height: 37px;
}

.name-row {
  display: flex;
  gap: 3px;
  margin: 4px 2px 0 0;
}

.name-row input {
  flex: 1;
  min-width: 0;
  height: 12px;
  background: #555;
  border: 1px solid #222;
}

.swatch {
  width: 11px;
  height: 12px;
  background: #ebd5a6;
  border: 1px solid #333;
}

.method {
  height: 31px;
}

.center-row {
  padding: 3px 16px 0 0;
  text-align: right;
}

.params .roll-head + .roll-head {
  margin: 2px 0 5px;
}

.spin-row {
  display: flex;
  justify-content: flex-end;
  gap: 3px;
  height: 10px;
  margin: 0 12px 2px 0;
}

.spin-row input {
  width: 26px;
  background: #5b5b5b;
  border: 1px solid #222;
}

.spin-row.wide {
  margin-right: 3px;
}

.spin {
  width: 7px;
  height: 10px;
  flex: none;
  border: 1px solid #333;
  background: url("data:image/svg+xml,%3Csvg xmlns='http://www.w3.org/2000/svg' width='5' height='8'%3E%3Cpath fill='%23ccc' d='M1 3h3L2.500 1zM1 5h3L2.500 7z'/%3E%3C/svg%3E") center no-repeat;
}

.hemi {
  margin-top: 19px;
}

.slice-row {
  margin: 17px 12px 3px 0;
  text-align: right;
}

.params label {
  display: flex;
  align-items: center;
  gap: 2px;
  height: 12px;
  margin-left: 8px;
  line-height: 8px;
  white-space: nowrap;
}

.spin-row + label {
  margin-top: 3px;
}

.params input[type="checkbox"] {
  width: 7px;
  height: 7px;
  border: 1px solid #1e1e1e;
  background: #505050;
}

.params input[type="checkbox"]:checked {
  background: url("data:image/svg+xml,%3Csvg xmlns='http://www.w3.org/2000/svg' width='5' height='5'%3E%3Cpath fill='none' stroke='%23111' d='M1 2l1 2 3-4'/%3E%3C/svg%3E") center no-repeat #d5d5d5;
}

/* status bar */
.status {
  display: flex;
  height: 30px;
  padding-top: 2px;
  background: #444;
  white-space: nowrap;
}

.listener {
  width: 59px;
  padding: 0 0 1px 1px;
  margin-right: 4px;
  color: #111;
}

.macro {
  height: 12px;
  background: #dcc2c6;
  border: 1px solid #b39a9d;
}

.script {
  height: 14px;
  margin-top: 1px;
  padding: 1px 2px;
  background: #fff;
  border: 1px solid #aaa;
}

.script span {
  font: 6px "Liberation Mono", monospace;
}

.info {
  flex: 1;
  min-width: 0;
  display: flex;
  flex-direction: column;
  gap: 2px;
}

.row {
  display: flex;
  height: 13px;
  align-items: center;
}

.row button {
  width: 16px;
}

.prompt {
  flex: 1;
  height: 13px;
  padding: 1px 3px;
  margin-right: 1px;
  border: 1px solid #393939;
}

.row label {
  display: flex;
  align-items: center;
  gap: 2px;
  margin-left: 2px;
  width: 47px;
}

.row label input {
  width: 36px;
  height: 12px;
  background: #555;
  border: 1px solid #262626;
  color: #222;
}

.row .box {
  width: 60px;
  height: 13px;
  padding: 1px 3px;
  border: 1px solid #333;
}

.row .tagbtn {
  width: 13px;
  height: 12px;
  margin-right: 2px;
  background: #3b7cc8;
}

.bigkey {
  width: 25px;
  height: 26px;
  margin: 0 2px;
  border: 1px solid #333;
}

.bigkey svg {
  width: 16px;
  height: 8px;
}

.keys {
  width: 41px;
  display: flex;
  flex-direction: column;
  gap: 2px;
  margin-right: 2px;
}

.keys button {
  height: 12px;
  border: 1px solid #2c2c2c;
  border-top-color: #666;
}

.keyfilter {
  width: 67px;
}

.keyfilter select {
  width: 67px;
  height: 12px;
}

.filter-row {
  display: flex;
  align-items: center;
  gap: 5px;
  height: 14px;
}

.play {
  width: 76px;
  margin-left: 6px;
}

.play > div {
  display: flex;
  align-items: center;
  height: 13px;
}

.play button:not(.spin) {
  width: 15px;
}

.play input {
  width: 38px;
  height: 11px;
  padding-left: 2px;
  background: #555;
  border: 1px solid #222;
}

.nav {
  display: grid;
  grid-template: 13px 13px / repeat(4, 14px);
}

/* export dialog */
.dialog {
  position: absolute;
  left: 354px;
  top: 47px;
  width: 470px;
  padding: 0 4px 4px;
  border: 1px solid #9fb2c2;
  border-radius: 4px;
  background: linear-gradient(90deg, #8e969c, #78838c 20%, #3d4c5b 34%, #2c3a48 60%, #4c5a67 92%, #7d8a95);
  box-shadow: inset 0 0 0 1px #2b3a48, 0 0 5px 1px #111;
}

.dlg-title {
  display: flex;
  align-items: center;
  gap: 1px;
  height: 15px;
}

.dlg-title h2 {
  flex: 1;
  color: #111;
}

.dlg-title .close {
  align-self: flex-start;
  height: 10px;
  border-radius: 0 0 3px 3px;
}

.dlg-body {
  padding: 5px 4px 3px 1px;
  border: 1px solid #222;
  background: #434343;
}

.dlg-row {
  display: grid;
  grid-template-columns: 50px 1fr;
  gap: 5px;
  align-items: center;
  height: 12px;
}

.dlg-row label {
  text-align: right;
}

.dlg-row.lookin {
  grid-template-columns: 50px 156px 1fr;
  margin: 9px 0 2px;
}

.dlg-body select {
  height: 12px;
  width: 100%;
}

.dlg-body .path {
  padding-left: 1px;
  font-size: 6px;
}

.drive {
  display: flex;
  align-items: center;
  padding-left: 3px;
  background: #fff;
  border: 1px solid #222;
}

.drive select {
  height: 10px;
  border: 0;
  background-color: #fff;
  background-image: url("data:image/svg+xml,%3Csvg xmlns='http://www.w3.org/2000/svg' width='10' height='10'%3E%3Cpath d='M0 0v10' stroke='%23222' stroke-width='2'/%3E%3Cpath d='M3 4h5L5.500 7z'/%3E%3C/svg%3E");
  background-position: right 0 center;
}

.dlg-tools {
  display: flex;
  align-items: center;
  gap: 4px;
  padding-left: 4px;
}

.dlg-main {
  display: flex;
  gap: 2px;
}

.places {
  width: 53px;
  padding-top: 1px;
  background: #f2f2f2;
  border: 1px solid #888;
}

.places button {
  flex-direction: column;
  width: 100%;
  height: 37px;
  padding-bottom: 6px;
  color: #111;
  white-space: nowrap;
}

.places svg {
  width: 20px;
  height: 20px;
}

.places .selected {
  background: #dcdcdc;
  border: 1px solid #888;
}

.dlg-right {
  flex: 1;
}

.files {
  display: grid;
  grid-template-columns: 146px 146px;
  grid-auto-rows: 34px;
  height: 288px;
  padding: 5px 4px;
  background: #fff;
}

.files li {
  display: flex;
  align-items: flex-start;
  gap: 3px;
}

.files svg {
  width: 29px;
  height: 29px;
}

.files div {
  display: flex;
  flex-direction: column;
  padding-top: 5px;
}

.files b {
  color: #111;
  font-weight: normal;
}

.files span {
  color: #888;
}

.fields {
  display: grid;
  grid-template-columns: 58px 1fr 54px;
  gap: 3px 0;
  align-items: center;
  padding: 5px 0 9px;
}

.fields label {
  padding-left: 1px;
}

.combo, .fields select {
  height: 13px;
  margin-right: 12px;
}

.fields select {
  width: auto;
}

.combo {
  min-width: 0;
  padding: 0 2px;
  border: 1px solid #222;
  color: #111;
  background: url("data:image/svg+xml,%3Csvg xmlns='http://www.w3.org/2000/svg' width='5' height='3'%3E%3Cpath d='M0 0h5L2.5 3z'/%3E%3C/svg%3E") no-repeat right 2px center #fff;
}

.mono {
  font: 6px "Liberation Mono", monospace;
}

.fields button {
  height: 14px;
  border: 1px solid #2b2b2b;
  border-top-color: #5c5c5c;
  white-space: pre;
}

/* input method bar */
.ime {
  position: absolute;
  right: 0;
  top: 471px;
  display: flex;
  align-items: center;
  gap: 3px;
  height: 13px;
  background: #fff;
  color: #2576c4;
}

.sogou {
  width: 15px;
  height: 14px;
  margin-right: 2px;
  transform: rotate(-8deg);
  border-radius: 2px;
  background: #f0542a;
  color: #fff;
  font-size: 14px;
  font-weight: bold;
  line-height: 14px;
  text-align: center;
}

.zh {
  font-size: 9px;
  font-weight: bold;
}
```
FILE: script.js
```js
const NS = 'http://www.w3.org/2000/svg';

function add(parent, tag, attrs, text) {
  const el = document.createElementNS(NS, tag);
  for (const key in attrs) el.setAttribute(key, attrs[key]);
  if (text !== undefined) el.textContent = text;
  parent.appendChild(el);
  return el;
}

function line(parent, x1, y1, x2, y2, stroke) {
  add(parent, 'line', { x1, y1, x2, y2, stroke });
}

const CX = 183.5;
const CY = 91.5;
const R = 28;
const STEP = 9.2;

function drawGrid(svg) {
  for (let i = -24; i <= 24; i++) {
    const x = Math.round(CX + i * STEP) + 0.5;
    const y = Math.round(CY + i * STEP) + 0.5;
    line(svg, x, 0, x, '100%', '#4e4e4e');
    if (Math.abs(i) < 12) line(svg, 0, y, '100%', y, '#525252');
  }
  line(svg, CX, 0, CX, '100%', '#111');
  line(svg, 0, CY, '100%', CY, '#111');
}

function drawSphere(svg, view) {
  const g = add(svg, 'g', { fill: 'none', stroke: '#e4e4e4', 'stroke-width': 0.8 });
  for (let k = 1; k < 16; k++) {
    const a = k * Math.PI / 16;
    const s = R * Math.sin(a);
    const c = R * Math.cos(a);
    if (view === 'top') {
      if (k <= 8) add(g, 'circle', { cx: CX, cy: CY, r: s });
    } else {
      add(g, 'line', { x1: CX - s, x2: CX + s, y1: CY - c, y2: CY - c });
      if (k <= 8) add(g, 'ellipse', { cx: CX, cy: CY, rx: Math.abs(c), ry: R });
    }
  }
  if (view === 'top') {
    for (let k = 0; k < 16; k++) {
      const a = k * Math.PI / 16;
      const dx = R * Math.cos(a);
      const dy = R * Math.sin(a);
      add(g, 'line', { x1: CX - dx, y1: CY - dy, x2: CX + dx, y2: CY + dy });
    }
  }
  add(svg, 'circle', { cx: CX, cy: CY, r: R, fill: 'none', stroke: '#4db4dc', 'stroke-width': 2 });
  add(svg, 'circle', { cx: CX, cy: CY, r: R - 1, fill: 'none', stroke: '#eee' });
}

document.querySelectorAll('.scene').forEach(svg => {
  const view = svg.dataset.view;
  drawGrid(svg);
  drawSphere(svg, view);
  if (view === 'top') {
    line(svg, CX, 0, CX, CY, '#a02424');
    line(svg, CX, CY, 302, CY, '#8a2626');
    add(svg, 'text', { x: 302, y: 91, fill: '#b02020' }, 'x');
    line(svg, 14.5, 154, 14.5, 168.5, '#0a8a0a');
    line(svg, 14.5, 168.5, 30, 168.5, '#b01010');
    add(svg, 'text', { x: 15, y: 154, fill: '#0a8a0a' }, 'y');
    add(svg, 'text', { x: 30, y: 168, fill: '#b01010' }, 'x');
    add(svg, 'text', { x: 15, y: 168, fill: '#1010c0' }, 'z');
  } else {
    line(svg, 66, CY, CX, CY, '#8a2626');
    add(svg, 'text', { x: 64, y: 92, fill: '#b02020' }, 'y');
    add(svg, 'text', { x: CX, y: 92, fill: '#b02020' }, 'x');
    line(svg, 14.5, 154, 14.5, 168.5, '#1010a0');
    line(svg, 0, 168.5, 14.5, 168.5, '#0a8a0a');
    add(svg, 'text', { x: 15, y: 154, fill: '#1010c0' }, 'z');
    add(svg, 'text', { x: 0, y: 168, fill: '#0a8a0a' }, 'y');
    add(svg, 'text', { x: 15, y: 168, fill: '#b01010' }, 'x');
  }
});

// time ruler, 0 to 100 frames
const ruler = document.getElementById('ruler');
add(ruler, 'rect', { x: '0.7%', y: 0, width: 4, height: 15, fill: '#8c8420' });
for (let f = 0; f <= 100; f++) {
  const x = 1 + f * 0.98 + '%';
  const major = f % 5 === 0;
  line(ruler, x, 1, x, major ? 8 : 6, major ? '#888' : '#6a6a6a');
  if (major) add(ruler, 'text', { x, y: 14, 'text-anchor': 'middle', fill: f ? '#bbb' : '#e0d850' }, f);
}
```
